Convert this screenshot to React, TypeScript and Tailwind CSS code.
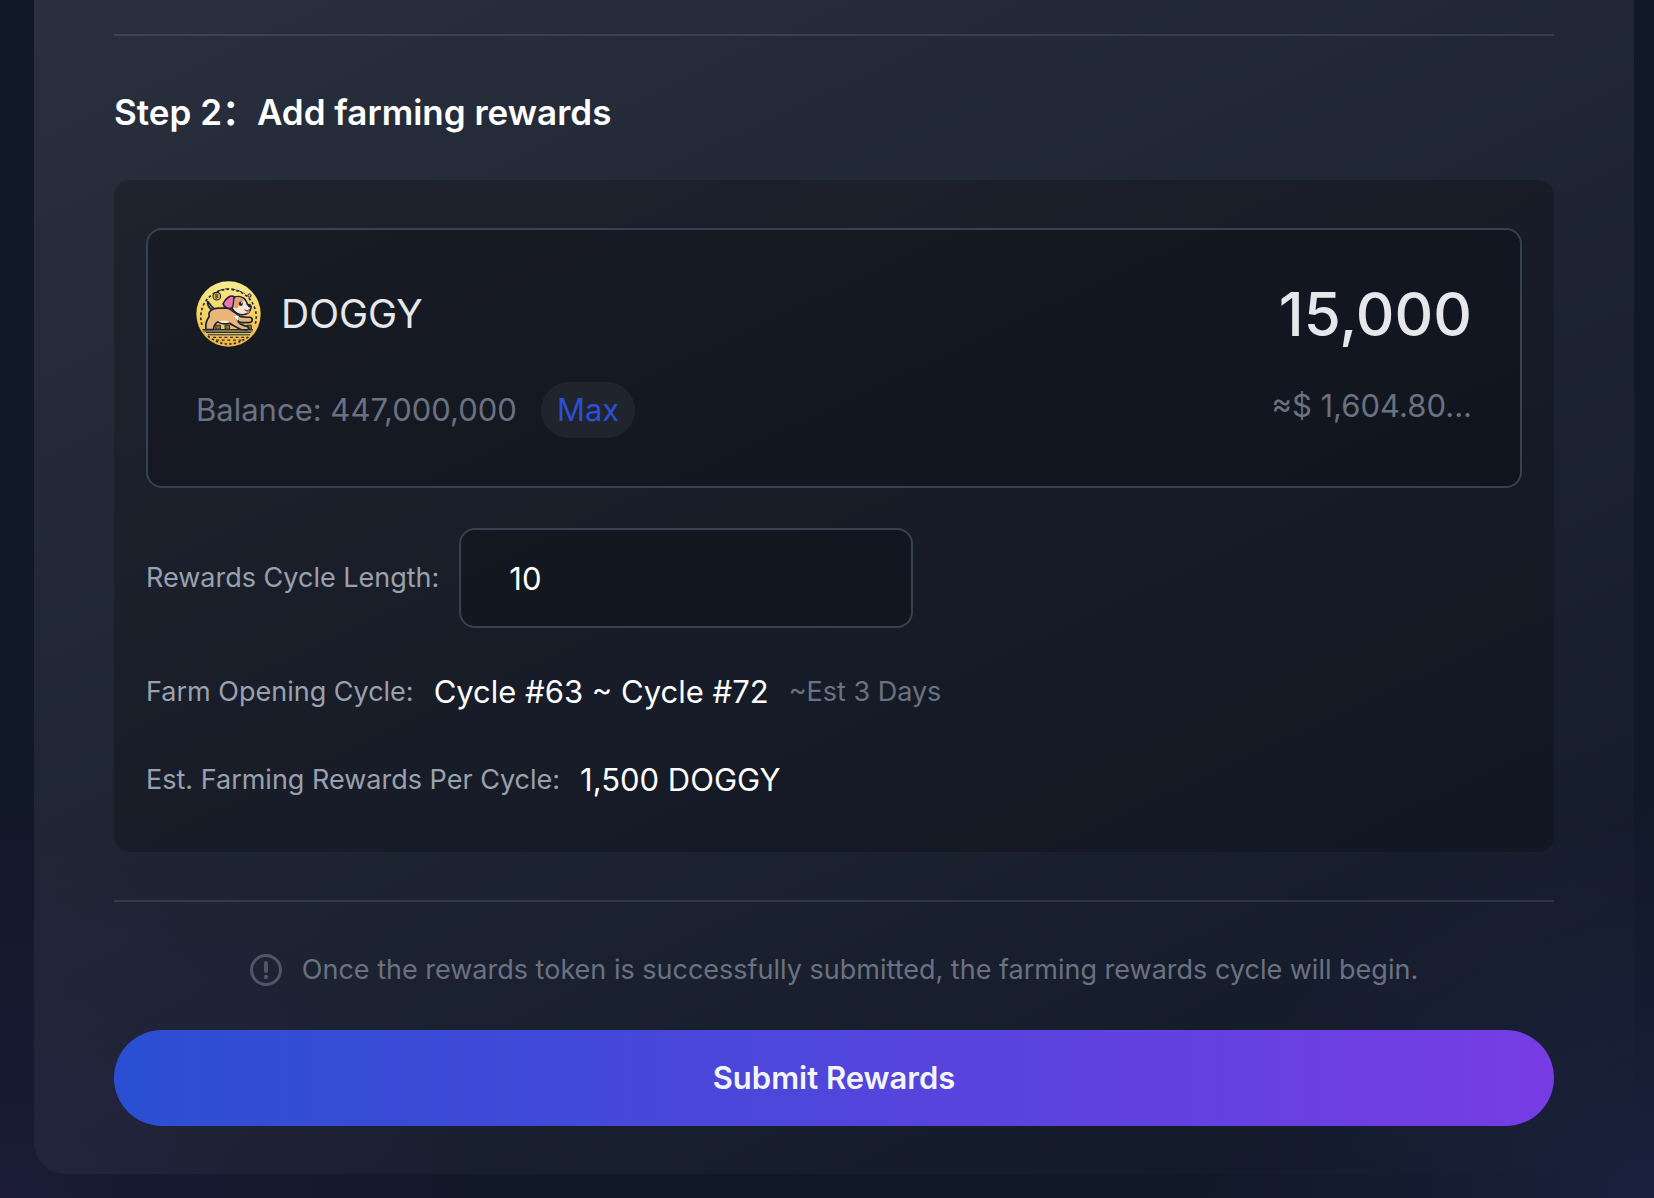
import { useState } from "react";

function DoggyCoin() {
  return (
    <svg viewBox="44 32 197 200" className="h-[66px] w-[65px] shrink-0" role="img" aria-label="DOGGY token">
      <defs>
        <linearGradient id="coin" x1="0" y1="0" x2="0" y2="1">
          <stop offset="0" stopColor="#f7ea93" />
          <stop offset="0.45" stopColor="#f8d662" />
          <stop offset="1" stopColor="#f0b145" />
        </linearGradient>
      </defs>
      <ellipse cx="142.500" cy="132" rx="97.500" ry="99" fill="url(#coin)" />
      <path d="M62 165A84 84 0 1 1 223 165" fill="none" stroke="#1d2a3d" strokeWidth="5" strokeDasharray="8 7" />
      <path d="M112 62Q148 46 192 70" fill="none" stroke="#1d2a3d" strokeWidth="3" strokeDasharray="13 7" />
      <path d="M80 199Q142 247 206 199" fill="none" stroke="#1d2a3d" strokeWidth="5" strokeDasharray="7 7" />
      <path d="M96 203H192M105 211H182" fill="none" stroke="#2a3038" strokeWidth="4" strokeDasharray="9 8" />
      <circle cx="107" cy="78" r="11.500" fill="#dfba4a" stroke="#1d2a3d" strokeWidth="3.500" />
      <path d="M104 72v12M104 72h4q4 3 0 6h-4m4 0q5 3 0 6h-4" fill="none" stroke="#1d2a3d" strokeWidth="2.500" />
      <circle cx="206" cy="76" r="5" fill="#e893a4" stroke="#1d2a3d" strokeWidth="3" />
      <path d="M64 183H216" stroke="#777b5c" strokeWidth="9" />
      <path d="M64 179H216M74 188H210M80 195H208" stroke="#1d2a3d" strokeWidth="3" />
      <path d="M104 166h14v12h-14zM132 166h14v12h-14zM198 166h14v12h-14z" fill="#a9671f" stroke="#1d2a3d" strokeWidth="3" />
      <g stroke="#17243a" strokeWidth="5" strokeLinejoin="round" strokeLinecap="round">
        <path d="M94 120C84 114 78 106 79 94C86 98 86 108 99 116Z" fill="#f3cfa0" />
        <path d="M168 136C184 144 194 141 208 142C218 145 216 157 206 158H184C172 157 165 150 160 143Z" fill="#e9b475" />
        <path d="M74 179C72 160 76 150 84 140C80 124 92 114 112 114H142L174 136C166 146 168 152 178 162L192 168C204 170 208 177 198 180L180 179C166 172 154 166 146 160C132 164 118 160 110 156C100 160 98 168 97 179Z" fill="#ebb577" />
        <path d="M148 97C152 80 170 76 184 82C194 86 198 96 200 104C208 102 214 108 210 116C208 122 204 130 196 132C180 138 162 132 154 116Z" fill="#f6e7cf" />
        <path d="M160 80C150 72 134 84 126 101C128 111 142 118 153 114C160 105 157 90 160 80Z" fill="#f26fb0" />
      </g>
      <path d="M164 82C176 78 188 84 190 92C180 94 177 107 169 114C162 117 157 112 158 104C162 97 160 88 164 82Z" fill="#e2a267" />
      <path d="M112 155C124 162 138 160 144 156C138 150 124 151 112 155Z" fill="#fae6c4" />
      <path d="M160 139L174 137L171 153Z" fill="#fff" />
      <ellipse cx="180" cy="101" rx="6" ry="7" fill="#17243a" />
      <circle cx="182" cy="98" r="2" fill="#fff" />
      <path d="M201 104Q211 102 212 109Q207 115 202 110Z" fill="#17243a" />
      <path d="M191 119Q198 126 206 119" fill="none" stroke="#17243a" strokeWidth="3" />
      <path d="M196 124L206 121Q207 131 200 131Z" fill="#ea6d86" />
    </svg>
  );
}

function NoticeIcon() {
  return (
    <svg viewBox="0 0 32 32" className="size-8 shrink-0 text-[#505665]" fill="none" stroke="currentColor" strokeLinecap="round" aria-hidden="true">
      <circle cx="16" cy="16" r="14.500" strokeWidth="3" />
      <path d="M16 9v8" strokeWidth="4" />
      <circle cx="16" cy="23" r="2.200" fill="currentColor" stroke="none" />
    </svg>
  );
}

export default function App() {
  const [amount, setAmount] = useState("15,000");
  const [length, setLength] = useState("10");

  return (
    <div className="min-h-screen bg-[#111827] bg-[radial-gradient(ellipse_480px_400px_at_0%_100%,#1b1b37,#1b1b3700),radial-gradient(ellipse_460px_400px_at_100%_100%,#1a203c,#1a203c00)] pr-5 pb-6 pl-[34px] font-['Inter','Noto_Sans_CJK_SC',sans-serif] text-white">
      <main className="rounded-b-[32px] bg-[linear-gradient(155deg,#ffffff1a,#ffffff08_70%,#ffffff00)] px-20 pt-[34px] pb-12">
        <hr className="border-t-2 border-white/10" />
        <h2 className="mt-14 text-[35px] leading-10 font-semibold">Step 2：Add farming rewards</h2>

        <section className="mt-12 rounded-2xl bg-black/20 px-8 pt-12 pb-[52px]">
          <div className="flex justify-between rounded-2xl border-2 border-[#374151] bg-black/20 p-12">
            <div>
              <div className="flex h-[72px] items-center gap-5">
                <DoggyCoin />
                <span className="text-[39px] text-gray-200">DOGGY</span>
              </div>
              <div className="mt-8 flex items-center gap-6 text-[31px] leading-10 text-gray-500">
                <span>Balance: 447,000,000</span>
                <button type="button" className="h-14 rounded-full bg-white/5 px-4 text-[#2b4fd6]">
                  Max
                </button>
              </div>
            </div>
            <div className="flex min-w-0 flex-col items-end">
              <input
                aria-label="DOGGY amount"
                value={amount}
                onChange={(e) => setAmount(e.target.value)}
                className="h-[72px] w-[400px] bg-transparent text-right text-[60px] font-medium text-gray-200 outline-none"
              />
              <span className="mt-9 text-[31px] leading-10 text-gray-500">≈$ 1,604.80...</span>
            </div>
          </div>

          <div className="mt-10 flex items-center gap-5">
            <label htmlFor="cycle-length" className="text-[27px] text-gray-400">
              Rewards Cycle Length:
            </label>
            <input
              id="cycle-length"
              value={length}
              onChange={(e) => setLength(e.target.value)}
              className="h-[100px] w-[454px] rounded-2xl border-2 border-[#374151] bg-black/20 px-12 text-[31px] outline-none"
            />
          </div>

          <div className="mt-11 flex items-center gap-5 leading-10">
            <span className="text-[27px] text-gray-400">Farm Opening Cycle:</span>
            <span className="text-[31px]">Cycle #63 ~ Cycle #72</span>
            <span className="text-[27px] text-gray-500">~Est 3 Days</span>
          </div>
          <div className="mt-12 flex items-center gap-5 leading-10">
            <span className="text-[27px] text-gray-400">Est. Farming Rewards Per Cycle:</span>
            <span className="text-[31px]">1,500 DOGGY</span>
          </div>
        </section>

        <hr className="mt-12 border-t-2 border-white/10" />
        <p className="mt-12 flex items-center justify-center gap-5 text-[27px] leading-10 text-gray-500">
          <NoticeIcon />
          Once the rewards token is successfully submitted, the farming rewards cycle will begin.
        </p>
        <button
          type="button"
          className="mt-10 h-24 w-full rounded-full bg-linear-to-r/srgb from-[#2a4fd2] to-[#773ce4] text-[31px] font-semibold text-gray-100"
        >
          Submit Rewards
        </button>
      </main>
    </div>
  );
}
